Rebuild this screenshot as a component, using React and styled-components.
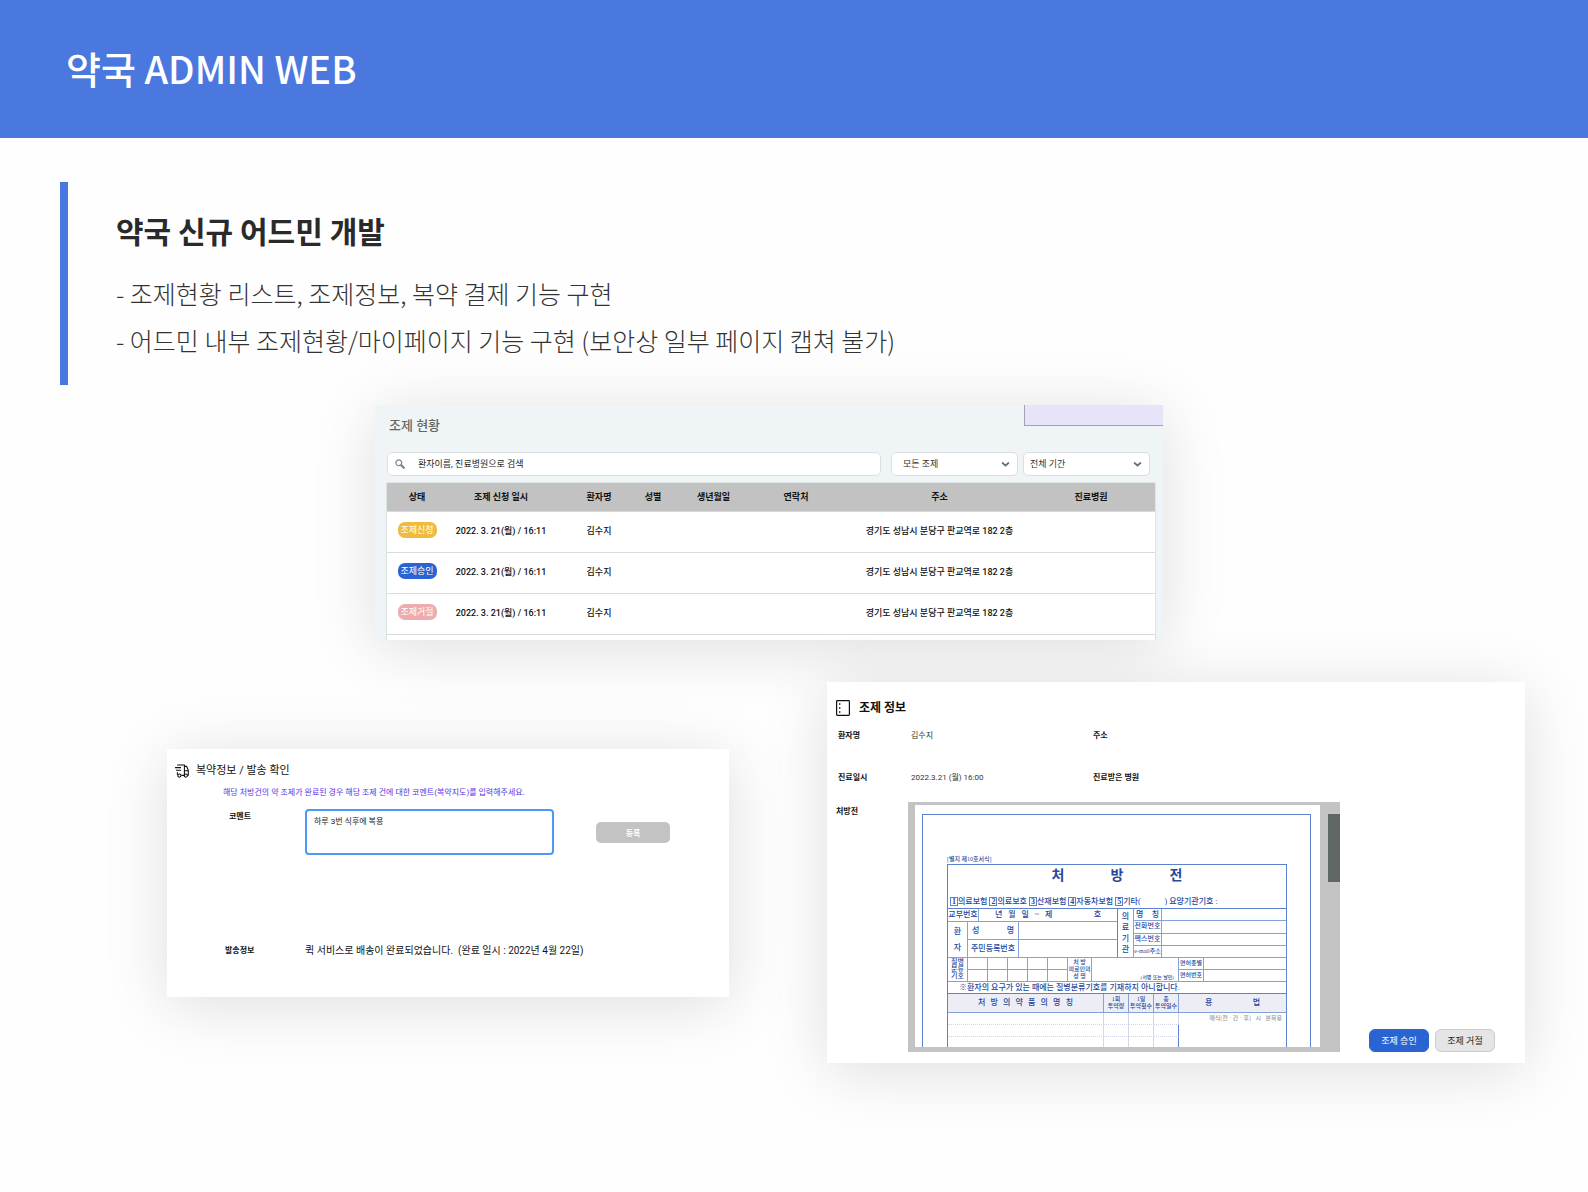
import React from 'react';
import styled, { createGlobalStyle } from 'styled-components';

const GlobalStyle = createGlobalStyle`
  *, *::before, *::after { box-sizing: border-box; }
  body {
    margin: 0;
    background: #fefefe;
    color: #111;
    font-family: Roboto, 'Noto Sans CJK KR', sans-serif;
  }
  h1, h2, h3, p, ul, dl, dd { margin: 0; padding: 0; }
  button, input, select, textarea { font-family: inherit; }
`;

/* ---------- slide ---------- */

const Banner = styled.header`
  display: flex;
  align-items: center;
  height: 138px;
  padding: 0 66px 2px;
  background: #4b78de;
`;

const BannerTitle = styled.h1`
  color: #fff;
  font: 500 38px/56px 'Noto Sans CJK KR', sans-serif;
`;

const Summary = styled.section`
  margin: 44px 60px 20px;
  padding: 26px 0 21px 48px;
  border-left: 8px solid #4b78de;
`;

const SummaryTitle = styled.h2`
  margin-bottom: 17px;
  color: #2a2a2a;
  font: 700 30px/45px 'Noto Sans CJK KR', sans-serif;
`;

const SummaryList = styled.ul`
  list-style: none;
  color: #333;
  font: 300 25px/47px 'Noto Sans CJK KR', sans-serif;
`;

const TopRow = styled.div`
  display: grid;
  grid-template-columns: 375fr minmax(0, 788fr) 425fr;
`;

const BottomRow = styled.div`
  display: grid;
  grid-template-columns: 167fr minmax(0, 562fr) 98fr minmax(0, 698fr) 63fr;
  align-items: start;
  margin-top: 42px;
  padding-bottom: 80px;
`;

const Card = styled.section`
  background: ${(p) => p.$tone || '#fff'};
  box-shadow: 0 8px 60px rgba(0, 0, 0, 0.13);
`;

/* ---------- list card ---------- */

const ListCard = styled(Card)`
  grid-column: 2;
  display: flex;
  flex-direction: column;
  height: 235px;
  overflow: hidden;
`;

const ListHead = styled.div`
  display: flex;
  justify-content: space-between;
  padding-left: 14px;
`;

const ListTitle = styled.h3`
  padding-top: 11px;
  color: #666;
  font-size: 13px;
  font-weight: 500;
  line-height: 20px;
`;

const AccountBox = styled.div`
  width: 139px;
  height: 21px;
  border: solid #a3a3ab;
  border-width: 0 0 1px 1px;
  background: #e6e4f8;
`;

const Filters = styled.form`
  display: flex;
  gap: 5px;
  padding: 16px 13px 0 12px;
`;

const SearchBox = styled.label`
  display: flex;
  flex: 1;
  align-items: center;
  gap: 13px;
  height: 24px;
  margin-right: 5px;
  padding: 0 7px;
  border: 1px solid #dcdfe1;
  border-radius: 5px;
  background: #fff;
`;

const SearchInput = styled.input`
  flex: 1;
  min-width: 0;
  padding: 0;
  border: 0;
  outline: 0;
  background: none;
  color: #222;
  font-size: 9px;
  &::placeholder { color: #222; opacity: 1; }
`;

const SelectWrap = styled.div`
  position: relative;
  width: 127px;
  svg {
    position: absolute;
    top: 8px;
    right: 8px;
    pointer-events: none;
  }
`;

const Select = styled.select`
  width: 100%;
  height: 24px;
  padding: 0 20px 0 ${(p) => p.$indent}px;
  appearance: none;
  border: 1px solid #dcdfe1;
  border-radius: 5px;
  background: #fff;
  color: #333;
  font-size: 9px;
`;

const ListTable = styled.table`
  flex: none;
  width: calc(100% - 20px);
  margin: 7px 8px 0 12px;
  table-layout: fixed;
  border-spacing: 0;
  background: #fff;
  box-shadow: 0 0 2px rgba(0, 0, 0, 0.2);
  font-size: 9px;
  text-align: center;
  white-space: nowrap;
  th {
    height: 29px;
    padding: 0 0 2px;
    border-bottom: 1px solid #d8dadc;
    background: #c2c2c2;
    font-weight: 700;
  }
  td {
    height: 41px;
    padding: 0 0 4px;
    border-bottom: 1px solid #d9dade;
    font-weight: 500;
  }
  th:last-child { padding-right: 24px; }
`;

const badgeTones = { request: '#efba3f', approve: '#2a64d2', reject: '#eeacae' };

const Badge = styled.span`
  display: inline-block;
  width: 39px;
  border-radius: 7px;
  background: ${(p) => badgeTones[p.$tone]};
  color: #fff;
  font-weight: 400;
  line-height: 16px;
`;

/* ---------- delivery card ---------- */

const DeliveryCard = styled(Card)`
  grid-column: 2;
  height: 248px;
  margin-top: 67px;
  padding: 13px 8px 12px;
`;

const CardHead = styled.div`
  display: flex;
  align-items: center;
  gap: ${(p) => p.$gap}px;
`;

const CardTitle = styled.h3`
  font-size: ${(p) => p.$size}px;
  font-weight: ${(p) => p.$weight};
  line-height: 18px;
`;

const Hint = styled.p`
  padding: 5px 0 0 48px;
  color: #5a32e6;
  font-size: 8px;
  line-height: 16px;
`;

const FieldRow = styled.div`
  display: grid;
  grid-template-columns: 76px 249px 42px 74px;
  align-items: start;
  margin-top: 8px;
  padding-left: 54px;
`;

const FieldLabel = styled.label`
  font-size: 8px;
  font-weight: 700;
  line-height: 16px;
`;

const Comment = styled.textarea`
  display: block;
  width: 100%;
  height: 46px;
  padding: 4px 7px;
  resize: none;
  border: 2px solid #4a98f7;
  border-radius: 4px;
  outline: 0;
  background: #fff;
  color: #222;
  font-size: 8px;
  line-height: 14px;
`;

const Register = styled.button`
  grid-column: 4;
  height: 21px;
  margin-top: 13px;
  padding: 0;
  border: 0;
  border-radius: 5px;
  background: #c3c3c3;
  color: #fff;
  font-size: 8px;
  font-weight: 700;
`;

const DeliveryInfo = styled.dl`
  display: grid;
  grid-template-columns: 80px 1fr;
  margin-top: 88px;
  padding-left: 50px;
  line-height: 16px;
  dt { font-size: 8px; font-weight: 700; }
  dd { font-size: 10px; white-space: pre; }
`;

/* ---------- prescription card ---------- */

const InfoCard = styled(Card)`
  grid-column: 4;
  padding: 17px 30px 11px 9px;
`;

const Facts = styled.dl`
  display: grid;
  grid-template-columns: 73px 182px 60px 1fr;
  margin-top: 11px;
  padding-left: 2px;
  font-size: 8px;
  line-height: 16px;
  row-gap: 26px;
  dt { font-weight: 700; white-space: nowrap; }
  dd { color: #333; }
`;

const Viewer = styled.div`
  display: flex;
  align-items: flex-end;
  justify-content: space-between;
  margin-top: 16px;
`;

const ViewerLabel = styled.h4`
  flex: 0 0 72px;
  align-self: flex-start;
  margin: 2px 0 0;
  font-size: 8px;
  line-height: 16px;
`;

const Frame = styled.div`
  display: flex;
  flex: 0 0 432px;
  min-width: 0;
  height: 250px;
  margin-right: auto;
  padding: 3px 0 5px 7px;
  background: #c3c3c3;
`;

const Paper = styled.div`
  flex: 1;
  min-width: 0;
  padding: 9px 9px 0 7px;
  overflow: hidden;
  background: #fff;
`;

const Sheet = styled.div`
  height: 233px;
  padding: 39px 23px 0 24px;
  border: solid #5b82cc;
  border-width: 1px 1px 0;
  color: #2548a0;
  font-family: 'Liberation Serif', 'Noto Sans CJK KR', serif;
  font-size: 8px;
  font-weight: 500;
  line-height: 10px;
`;

const Track = styled.div`
  flex: 0 0 20px;
  padding: 9px 0 0 8px;
`;

const Thumb = styled.div`
  height: 68px;
  background: #5f6664;
`;

const FormNo = styled.p`
  font-size: 6px;
`;

const FormBox = styled.div`
  border: solid #5b82cc;
  border-width: 1px 0 0 1px;
`;

const FormHead = styled.div`
  border: solid #5b82cc;
  border-width: 0 1px 1px 0;
`;

const FormTitle = styled.h4`
  width: 131px;
  margin: 0 auto;
  font-size: 14px;
  font-weight: 700;
  line-height: 22px;
  text-align-last: justify;
`;

const Insurance = styled.p`
  display: flex;
  align-items: center;
  height: 13px;
  margin-top: 8px;
  padding-left: 2px;
  white-space: pre;
`;

const BoxNo = styled.b`
  width: 8px;
  border: 1px solid #5b82cc;
  line-height: 7px;
  font-size: 8px;
  text-align: center;
`;

const FormTable = styled.table`
  width: ${(p) => (p.$width ? `${p.$width}px` : '100%')};
  table-layout: fixed;
  border-spacing: 0;
  td, th {
    height: ${(p) => p.$row}px;
    padding: 0;
    border: solid #86a1d8;
    border-width: 0 1px 1px 0;
    font-weight: 500;
    text-align: center;
    white-space: nowrap;
  }
  tr > :last-child { border-right-color: #5b82cc; }
`;

const Pair = styled.div`
  display: flex;
  > table { flex: 1; }
`;

const Spread = styled.span`
  display: block;
  margin: 0 ${(p) => p.$inset || 0}px;
  text-align-last: justify;
`;

const Stack = styled.span`
  display: block;
  padding: 0 ${(p) => (p.$end ? 4 : 0)}px;
  font-size: ${(p) => p.$size || 7}px;
  line-height: ${(p) => p.$line || 7}px;
  text-align: ${(p) => (p.$end ? 'right' : 'center')};
  white-space: pre-line;
`;

const Notice = styled.p`
  height: 12px;
  padding-left: 11px;
  border: solid #5b82cc;
  border-width: 0 1px 1px 0;
  line-height: 11px;
  white-space: nowrap;
`;

const SignCell = styled.td`
  vertical-align: bottom;
`;

const DrugTable = styled(FormTable)`
  th { background: #ededf5; }
  td {
    height: 12px;
    border-color: #d3d7ec;
    border-style: solid solid dotted;
    color: #999;
    vertical-align: top;
  }
`;

const Actions = styled.div`
  display: flex;
  gap: 6px;
`;

const Action = styled.button`
  width: 60px;
  height: 23px;
  padding: 0;
  border: 1px solid ${(p) => (p.$primary ? '#2a64d2' : '#cbcbcb')};
  border-radius: 6px;
  background: ${(p) => (p.$primary ? '#2a64d2' : '#e5e5e5')};
  color: ${(p) => (p.$primary ? '#fff' : '#222')};
  font-size: 9px;
`;

/* ---------- icons ---------- */

const SearchIcon = () => (
  <svg width="10" height="10" viewBox="0 0 10 10" fill="none" stroke="#7b858d">
    <circle cx="3.8" cy="3.8" r="2.9" strokeWidth="1.2" />
    <path d="M6.4 6.4 8.8 8.8" strokeWidth="2.2" strokeLinecap="round" />
  </svg>
);

const Chevron = () => (
  <svg width="9" height="9" viewBox="0 0 9 9" fill="none" stroke="#66707c" strokeWidth="1.8">
    <path d="M1.6 3 4.5 5.6 7.4 3" strokeLinecap="round" />
  </svg>
);

const TruckIcon = () => (
  <svg width="14" height="14" viewBox="0 0 14 14" fill="none" stroke="#111" strokeWidth="1.1">
    <path d="M2.2 1h7.2v10.4H6.4M0 3.6h6M1 6.2h5M2.4 8.2v2.6M9.4 2.4h2.2l1.7 4v4.8h-.8M9.6 6.8h3.6" />
    <circle cx="4.4" cy="11.6" r="1.6" />
    <circle cx="10.8" cy="11.6" r="1.6" />
  </svg>
);

const NotebookIcon = () => (
  <svg width="14" height="16" viewBox="0 0 14 16" fill="none" stroke="#111">
    <rect x="0.6" y="0.6" width="12.8" height="14.8" rx="0.8" strokeWidth="1.2" />
    <path d="M3 4h1.4M3 8h1.4M3 12h1.4" strokeWidth="1.4" />
  </svg>
);

/* ---------- data ---------- */

const columns = [
  ['상태', 60],
  ['조제 신청 일시', 108],
  ['환자명', 88],
  ['성별', 20],
  ['생년월일', 101],
  ['연락처', 64],
  ['주소', 223],
  ['진료병원', 104],
];

const rows = [
  { tone: 'request', status: '조제신청' },
  { tone: 'approve', status: '조제승인' },
  { tone: 'reject', status: '조제거절' },
];

const Cols = ({ widths }) => (
  <colgroup>
    {widths.map((w, i) => (
      <col key={i} width={w} />
    ))}
  </colgroup>
);

function DispenseList() {
  return (
    <ListCard $tone="#eff5f6">
      <ListHead>
        <ListTitle>조제 현황</ListTitle>
        <AccountBox />
      </ListHead>
      <Filters>
        <SearchBox>
          <SearchIcon />
          <SearchInput aria-label="검색" placeholder="환자이름, 진료병원으로 검색" />
        </SearchBox>
        <SelectWrap>
          <Select $indent={11} aria-label="조제">
            <option>모든 조제</option>
          </Select>
          <Chevron />
        </SelectWrap>
        <SelectWrap>
          <Select $indent={6} aria-label="기간">
            <option>전체 기간</option>
          </Select>
          <Chevron />
        </SelectWrap>
      </Filters>
      <ListTable>
        <Cols widths={columns.map((c) => c[1])} />
        <thead>
          <tr>
            {columns.map(([name]) => (
              <th key={name}>{name}</th>
            ))}
          </tr>
        </thead>
        <tbody>
          {rows.map((r) => (
            <tr key={r.status}>
              <td>
                <Badge $tone={r.tone}>{r.status}</Badge>
              </td>
              <td>2022. 3. 21(월) / 16:11</td>
              <td>김수지</td>
              <td />
              <td />
              <td />
              <td>경기도 성남시 분당구 판교역로 182 2층</td>
              <td />
            </tr>
          ))}
          <tr>
            <td colSpan={8} />
          </tr>
        </tbody>
      </ListTable>
    </ListCard>
  );
}

function Delivery() {
  return (
    <DeliveryCard>
      <CardHead $gap={7}>
        <TruckIcon />
        <CardTitle $size={11} $weight={400}>복약정보 / 발송 확인</CardTitle>
      </CardHead>
      <Hint>해당 처방건의 약 조제가 완료된 경우 해당 조제 건에 대한 코멘트(복약지도)를 입력해주세요.</Hint>
      <FieldRow>
        <FieldLabel htmlFor="comment">코멘트</FieldLabel>
        <Comment id="comment" defaultValue="하루 3번 식후에 복용" />
        <Register type="button">등록</Register>
      </FieldRow>
      <DeliveryInfo>
        <dt>발송정보</dt>
        <dd>{'퀵 서비스로 배송이 완료되었습니다.  (완료 일시 : 2022년 4월 22일)'}</dd>
      </DeliveryInfo>
    </DeliveryCard>
  );
}

const insurances = ['의료보험 ', '의료보호 ', '산재보험 ', '자동차보험 ', '기타(            ) 요양기관기호 :'];

function Prescription() {
  return (
    <Sheet>
      <FormNo>[별지 제10호서식]</FormNo>
      <FormBox>
        <FormHead>
          <FormTitle>처 방 전</FormTitle>
          <Insurance>
            {insurances.map((name, i) => (
              <React.Fragment key={name}>
                <BoxNo>{i + 1}</BoxNo>
                {name}
              </React.Fragment>
            ))}
          </Insurance>
        </FormHead>
        <Pair>
          <div>
            <FormTable $width={170} $row={13}>
              <Cols widths={[31, 139]} />
              <tbody>
                <tr>
                  <td>교부번호</td>
                  <td><Spread $inset={16}>년 월 일 ~ 제 &nbsp; &nbsp; &nbsp; 호</Spread></td>
                </tr>
              </tbody>
            </FormTable>
            <FormTable $width={170} $row={18}>
              <Cols widths={[20, 51, 99]} />
              <tbody>
                <tr>
                  <td rowSpan={2}><Stack $size={8} $line={16}>{'환\n자'}</Stack></td>
                  <td><Spread $inset={4}>성 명</Spread></td>
                  <td />
                </tr>
                <tr>
                  <td>주민등록번호</td>
                  <td />
                </tr>
              </tbody>
            </FormTable>
          </div>
          <FormTable $row={12}>
            <Cols widths={[16, 28, 125]} />
            <tbody>
              <tr>
                <td rowSpan={4}><Stack $size={8} $line={11}>{'의\n료\n기\n관'}</Stack></td>
                <td><Spread $inset={2}>명 칭</Spread></td>
                <td />
              </tr>
              <tr><td><Stack $size={7}>전화번호</Stack></td><td /></tr>
              <tr><td><Stack $size={7}>팩스번호</Stack></td><td /></tr>
              <tr><td><Stack $size={6}>e-mail주소</Stack></td><td /></tr>
            </tbody>
          </FormTable>
        </Pair>
        <FormTable $row={12}>
          <Cols widths={[20, 20, 20, 20, 20, 20, 24, 87, 25, 83]} />
          <tbody>
            <tr>
              <td rowSpan={2}><Stack $size={7}>{'질병\n분류\n기호'}</Stack></td>
              <td /><td /><td /><td /><td />
              <td rowSpan={2}><Stack $size={6}>{'처 방\n의료인의\n성 명'}</Stack></td>
              <SignCell rowSpan={2}><Stack $size={5} $end>(서명 또는 날인)</Stack></SignCell>
              <td><Stack $size={6}>면허종별</Stack></td>
              <td />
            </tr>
            <tr>
              <td /><td /><td /><td /><td />
              <td><Stack $size={6}>면허번호</Stack></td>
              <td />
            </tr>
          </tbody>
        </FormTable>
        <Notice>※환자의 요구가 있는 때에는 질병분류기호를 기재하지 아니합니다.</Notice>
        <DrugTable $row={19}>
          <Cols widths={[156, 25, 25, 25, 108]} />
          <thead>
            <tr>
              <th><Spread $inset={30}>처 방 의 약 품 의 명 칭</Spread></th>
              <th><Stack $size={6}>{'1회\n투약량'}</Stack></th>
              <th><Stack $size={6}>{'1일\n투약횟수'}</Stack></th>
              <th><Stack $size={6}>{'총\n투약일수'}</Stack></th>
              <th><Spread $inset={26}>용 법</Spread></th>
            </tr>
          </thead>
          <tbody>
            <tr>
              <td /><td /><td /><td />
              <td rowSpan={3}><Stack $size={6} $line={11} $end>매식(전 · 간 · 후) &nbsp; 시 &nbsp; 분복용</Stack></td>
            </tr>
            <tr><td /><td /><td /><td /></tr>
            <tr><td /><td /><td /><td /></tr>
          </tbody>
        </DrugTable>
      </FormBox>
    </Sheet>
  );
}

function DispenseInfo() {
  return (
    <InfoCard>
      <CardHead $gap={9}>
        <NotebookIcon />
        <CardTitle $size={12} $weight={700}>조제 정보</CardTitle>
      </CardHead>
      <Facts>
        <dt>환자명</dt>
        <dd>김수지</dd>
        <dt>주소</dt>
        <dd />
        <dt>진료일시</dt>
        <dd>2022.3.21 (월) 16:00</dd>
        <dt>진료받은 병원</dt>
        <dd />
      </Facts>
      <Viewer>
        <ViewerLabel>처방전</ViewerLabel>
        <Frame>
          <Paper>
            <Prescription />
          </Paper>
          <Track>
            <Thumb />
          </Track>
        </Frame>
        <Actions>
          <Action type="button" $primary>조제 승인</Action>
          <Action type="button">조제 거절</Action>
        </Actions>
      </Viewer>
    </InfoCard>
  );
}

export default function App() {
  return (
    <>
      <GlobalStyle />
      <Banner>
        <BannerTitle>약국 ADMIN WEB</BannerTitle>
      </Banner>
      <main>
        <Summary>
          <SummaryTitle>약국 신규 어드민 개발</SummaryTitle>
          <SummaryList>
            <li>- 조제현황 리스트, 조제정보, 복약 결제 기능 구현</li>
            <li>- 어드민 내부 조제현황/마이페이지 기능 구현 (보안상 일부 페이지 캡쳐 불가)</li>
          </SummaryList>
        </Summary>
        <TopRow>
          <DispenseList />
        </TopRow>
        <BottomRow>
          <Delivery />
          <DispenseInfo />
        </BottomRow>
      </main>
    </>
  );
}
